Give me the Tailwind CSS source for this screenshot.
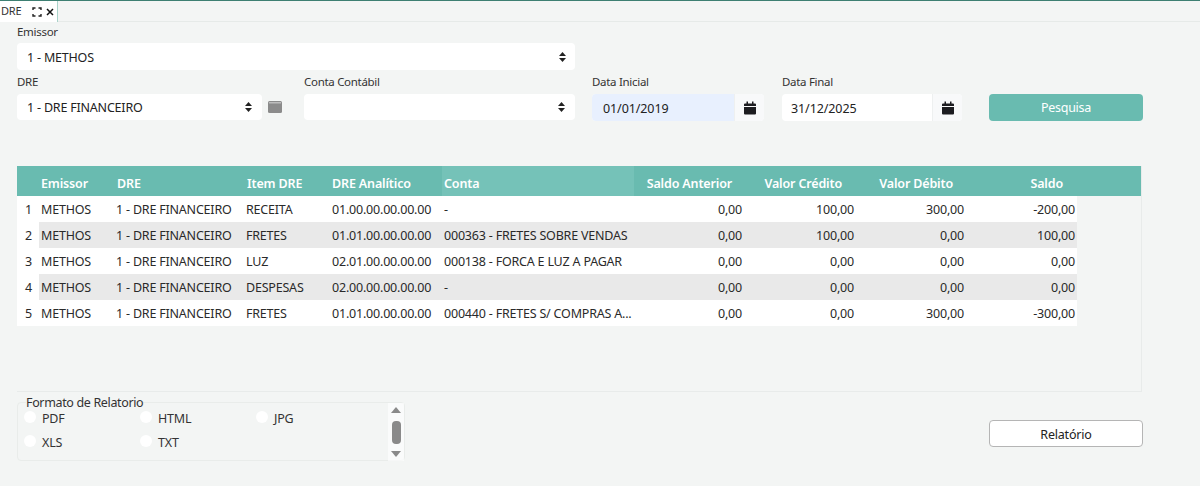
<!doctype html>
<html lang="pt">
<head>
<meta charset="utf-8">
<script src="https://cdn.jsdelivr.net/npm/@tailwindcss/browser@4"></script>
<title>DRE</title>
</head>
<body class="w-[1200px] h-[486px] overflow-hidden bg-[#f3f5f4] text-[#222] font-['Noto_Sans',sans-serif] text-[12px]">
<div class="h-[22px] border-t border-t-[#3d7f72] border-b border-b-[#e6eae8] flex">
  <div class="w-[58px] h-[21px] bg-white border-r border-[#a9d3ca] flex items-center pl-[1px]">
    <span class="text-[11px] text-[#333] tracking-[-0.2px]">DRE</span>
    <svg class="ml-[11px]" width="10" height="10" viewBox="0 0 10 10" fill="none" stroke="#222" stroke-width="1.4"><path d="M1 3V1h2.500M6.500 1H9v2M9 7v2H6.500M3.500 9H1V7"/></svg>
    <svg class="ml-[4px]" width="8" height="8" viewBox="0 0 8 8" fill="none" stroke="#111" stroke-width="1.500"><path d="M1 1l6 6M7 1L1 7"/></svg>
  </div>
</div>

<main class="pl-[17px]">
  <label class="block h-[21px] pt-[1px] leading-[17px] text-[#333] text-[11.500px] tracking-[-0.3px]">Emissor</label>
  <div class="w-[558px] h-[27px] bg-white rounded-[4px] flex items-center justify-between pl-[10px] pr-[9px] text-[12.500px] tracking-[-0.2px]">
    <span class="pt-[4px]">1 - METHOS</span>
    <svg width="7" height="10" viewBox="0 0 7 10" fill="#222"><path d="M3.500 0L7 4H0zM3.500 10L0 6h7z"/></svg>
  </div>

  <div class="flex mt-[3px]">
    <div class="w-[287px]">
      <label class="block h-[21px] leading-[18px] text-[#333] text-[11.500px] tracking-[-0.3px]">DRE</label>
      <div class="flex items-center">
        <div class="w-[245px] h-[26px] bg-white rounded-[4px] flex items-center justify-between pl-[10px] pr-[10px] text-[12.500px] tracking-[-0.2px]">
          <span class="pt-[2px]">1 - DRE FINANCEIRO</span>
          <svg width="7" height="10" viewBox="0 0 7 10" fill="#222"><path d="M3.500 0L7 4H0zM3.500 10L0 6h7z"/></svg>
        </div>
        <svg class="ml-[6px]" width="14" height="12" viewBox="0 0 14 12"><rect width="14" height="12" rx="1.500" fill="#8b8b8b"/><rect x="1" y="1" width="12" height="1.500" fill="#bdbdbd"/></svg>
      </div>
    </div>
    <div class="w-[288px]">
      <label class="block h-[21px] leading-[18px] text-[#333] text-[11.500px] tracking-[-0.3px]">Conta Contábil</label>
      <div class="w-[271px] h-[26px] bg-white rounded-[4px] flex items-center justify-end pr-[10px]">
        <svg width="7" height="10" viewBox="0 0 7 10" fill="#222"><path d="M3.500 0L7 4H0zM3.500 10L0 6h7z"/></svg>
      </div>
    </div>
    <div class="w-[190px]">
      <label class="block h-[21px] leading-[18px] text-[#333] text-[11.500px] tracking-[-0.3px]">Data Inicial</label>
      <div class="w-[172px] h-[27px] bg-white rounded-[4px] flex overflow-hidden">
        <div class="w-[142px] bg-[#e8f0fe] flex items-center pl-[11px] pt-[3px] text-[12.500px] tracking-[-0.1px]">01/01/2019</div>
        <div class="flex-1 bg-[#f8f9fa] flex items-center justify-center border-l border-[#eef0f0]">
          <svg width="12" height="14" viewBox="0 0 12 13" fill="#1c1c20"><path d="M2.500 0h1.500v2h4V0h1.500v2H11a1 1 0 0 1 1 1v1.500H0V3a1 1 0 0 1 1-1h1.500zM0 5.500h12V12a1 1 0 0 1-1 1H1a1 1 0 0 1-1-1z"/></svg>
        </div>
      </div>
    </div>
    <div class="w-[207px]">
      <label class="block h-[21px] leading-[18px] text-[#333] text-[11.500px] tracking-[-0.3px]">Data Final</label>
      <div class="w-[180px] h-[27px] bg-white rounded-[4px] flex overflow-hidden">
        <div class="w-[150px] flex items-center pl-[9px] pt-[3px] text-[12.500px] tracking-[-0.1px]">31/12/2025</div>
        <div class="flex-1 bg-[#f8f9fa] flex items-center justify-center border-l border-[#eef0f0]">
          <svg width="12" height="14" viewBox="0 0 12 13" fill="#1c1c20"><path d="M2.500 0h1.500v2h4V0h1.500v2H11a1 1 0 0 1 1 1v1.500H0V3a1 1 0 0 1 1-1h1.500zM0 5.500h12V12a1 1 0 0 1-1 1H1a1 1 0 0 1-1-1z"/></svg>
        </div>
      </div>
    </div>
    <div class="pt-[21px]">
      <button class="w-[154px] h-[27px] rounded-[4px] bg-[#69bbb0] text-white text-[12.500px] tracking-[-0.3px] text-center pt-[2px]">Pesquisa</button>
    </div>
  </div>

  <section class="mt-[45px] w-[1125px] h-[226px] border-r border-b border-[#e8ebea] overflow-hidden">
    <table class="table-fixed w-[1125px] border-collapse text-[12.500px] tracking-[-0.2px] text-[#2a2a2a]">
      <colgroup>
        <col class="w-[22px]"><col class="w-[76px]"><col class="w-[130px]"><col class="w-[85px]"><col class="w-[112px]"><col class="w-[192px]"><col class="w-[111px]"><col class="w-[112px]"><col class="w-[112px]"><col class="w-[108px]"><col>
      </colgroup>
      <thead class="text-white font-semibold tracking-[-0.15px] [&_th]:pt-[6px]">
        <tr class="h-[30px] bg-[#69bbb0]">
          <th></th>
          <th class="text-left font-semibold pl-[2px]">Emissor</th>
          <th class="text-left font-semibold pl-[2px]">DRE</th>
          <th class="text-left font-semibold pl-[2px]">Item DRE</th>
          <th class="text-left font-semibold pl-[2px]">DRE Analítico</th>
          <th class="text-left font-semibold pl-[2px] bg-[#75c2b8]">Conta</th>
          <th class="text-right font-semibold pr-[13px]">Saldo Anterior</th>
          <th class="text-right font-semibold pr-[15px]">Valor Crédito</th>
          <th class="text-right font-semibold pr-[16px]">Valor Débito</th>
          <th class="text-right font-semibold pr-[14px]">Saldo</th>
          <th></th>
        </tr>
      </thead>
      <tbody class="[&_td]:pt-[3px]">
        <tr class="h-[26px]">
          <td class="bg-white pl-[8px]">1</td><td class="bg-white pl-[2px]">METHOS</td><td class="bg-white pl-[1px]">1 - DRE FINANCEIRO</td><td class="bg-white pl-[1px]">RECEITA</td><td class="bg-white pl-[2px]">01.00.00.00.00.00</td><td class="bg-white pl-[2px] whitespace-nowrap">-</td><td class="bg-white text-right pr-[3px]">0,00</td><td class="bg-white text-right pr-[3px]">100,00</td><td class="bg-white text-right pr-[5px]">300,00</td><td class="bg-white text-right pr-[2px]">-200,00</td><td></td>
        </tr>
        <tr class="h-[26px]">
          <td class="bg-white pl-[8px]">2</td><td class="bg-[#e9e9e9] pl-[2px]">METHOS</td><td class="bg-[#e9e9e9] pl-[1px]">1 - DRE FINANCEIRO</td><td class="bg-[#e9e9e9] pl-[1px]">FRETES</td><td class="bg-[#e9e9e9] pl-[2px]">01.01.00.00.00.00</td><td class="bg-[#e9e9e9] pl-[2px] whitespace-nowrap">000363 - FRETES SOBRE VENDAS</td><td class="bg-[#e9e9e9] text-right pr-[3px]">0,00</td><td class="bg-[#e9e9e9] text-right pr-[3px]">100,00</td><td class="bg-[#e9e9e9] text-right pr-[5px]">0,00</td><td class="bg-[#e9e9e9] text-right pr-[2px]">100,00</td><td></td>
        </tr>
        <tr class="h-[26px]">
          <td class="bg-white pl-[8px]">3</td><td class="bg-white pl-[2px]">METHOS</td><td class="bg-white pl-[1px]">1 - DRE FINANCEIRO</td><td class="bg-white pl-[1px]">LUZ</td><td class="bg-white pl-[2px]">02.01.00.00.00.00</td><td class="bg-white pl-[2px] whitespace-nowrap">000138 - FORCA E LUZ A PAGAR</td><td class="bg-white text-right pr-[3px]">0,00</td><td class="bg-white text-right pr-[3px]">0,00</td><td class="bg-white text-right pr-[5px]">0,00</td><td class="bg-white text-right pr-[2px]">0,00</td><td></td>
        </tr>
        <tr class="h-[26px]">
          <td class="bg-white pl-[8px]">4</td><td class="bg-[#e9e9e9] pl-[2px]">METHOS</td><td class="bg-[#e9e9e9] pl-[1px]">1 - DRE FINANCEIRO</td><td class="bg-[#e9e9e9] pl-[1px]">DESPESAS</td><td class="bg-[#e9e9e9] pl-[2px]">02.00.00.00.00.00</td><td class="bg-[#e9e9e9] pl-[2px] whitespace-nowrap">-</td><td class="bg-[#e9e9e9] text-right pr-[3px]">0,00</td><td class="bg-[#e9e9e9] text-right pr-[3px]">0,00</td><td class="bg-[#e9e9e9] text-right pr-[5px]">0,00</td><td class="bg-[#e9e9e9] text-right pr-[2px]">0,00</td><td></td>
        </tr>
        <tr class="h-[26px]">
          <td class="bg-white pl-[8px]">5</td><td class="bg-white pl-[2px]">METHOS</td><td class="bg-white pl-[1px]">1 - DRE FINANCEIRO</td><td class="bg-white pl-[1px]">FRETES</td><td class="bg-white pl-[2px]">01.01.00.00.00.00</td><td class="bg-white pl-[2px] whitespace-nowrap">000440 - FRETES S/ COMPRAS A...</td><td class="bg-white text-right pr-[3px]">0,00</td><td class="bg-white text-right pr-[3px]">0,00</td><td class="bg-white text-right pr-[5px]">300,00</td><td class="bg-white text-right pr-[2px]">-300,00</td><td></td>
        </tr>
      </tbody>
    </table>
  </section>

  <div class="flex mt-[4px]">
    <div class="w-[972px]">
      <fieldset class="w-[388px] h-[65px] border border-[#e9ecea] rounded-[4px] relative pl-[6px] flex">
        <legend class="ml-[2px] px-0 leading-[13px] text-[12.500px] tracking-[-0.35px] text-[#333]">Formato de Relatorio</legend>
        <div class="w-[365px] -mt-[2px] grid grid-cols-[116px_116px_1fr] auto-rows-[24px] text-[12.500px] tracking-[-0.2px] text-[#333]">
          <label class="flex items-center gap-[6px]"><span class="w-[12px] h-[12px] rounded-full bg-white -mt-[4px]"></span>PDF</label>
          <label class="flex items-center gap-[6px]"><span class="w-[12px] h-[12px] rounded-full bg-white -mt-[4px]"></span>HTML</label>
          <label class="flex items-center gap-[6px]"><span class="w-[12px] h-[12px] rounded-full bg-white -mt-[4px]"></span>JPG</label>
          <label class="flex items-center gap-[6px]"><span class="w-[12px] h-[12px] rounded-full bg-white -mt-[4px]"></span>XLS</label>
          <label class="flex items-center gap-[6px]"><span class="w-[12px] h-[12px] rounded-full bg-white -mt-[4px]"></span>TXT</label>
        </div>
        <div class="absolute left-[370px] top-[-6px] w-[16px] h-[58px] bg-white/60 flex flex-col items-center justify-between py-[4px]">
          <svg width="10" height="6" viewBox="0 0 10 6" fill="#8a8a8a"><path d="M5 0L10 6H0z"/></svg>
          <div class="w-[9px] h-[23px] rounded-[4px] bg-[#8a8a8a]"></div>
          <svg width="10" height="6" viewBox="0 0 10 6" fill="#8a8a8a"><path d="M5 6L0 0h10z"/></svg>
        </div>
      </fieldset>
    </div>
    <div class="pt-[24px]">
      <button class="w-[154px] h-[27px] rounded-[4px] bg-white border border-[#b5b5b5] text-[12.500px] tracking-[-0.2px] text-[#222] pt-[3px]">Relatório</button>
    </div>
  </div>
</main>
</body>
</html>
